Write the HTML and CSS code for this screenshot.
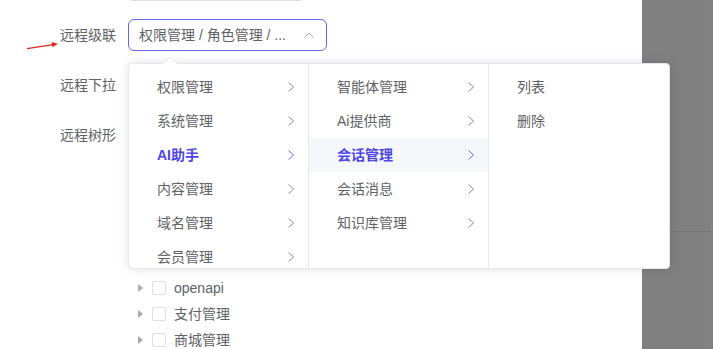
FILE: index.html
```html
<!DOCTYPE html>
<html lang="zh-CN">
<head>
<meta charset="utf-8">
<title>远程级联</title>
<link rel="stylesheet" href="styles.css">
</head>
<body>
<div class="app">
  <main class="main">
    <form class="form">
      <div class="form-item form-item-prev">
        <div class="label"></div>
        <div class="content"><div class="prev-input"></div></div>
      </div>
      <div class="form-item">
        <label class="label">远程级联</label>
        <div class="content">
          <div class="cascader">
            <span class="cascader-text">权限管理 / 角色管理 / ...</span>
            <svg class="cascader-caret" width="10" height="6" viewBox="0 0 10 6"><path d="M0.5 5.5 L5 1 L9.5 5.5" fill="none" stroke="#a8abb2" stroke-width="1"/></svg>
          </div>
        </div>
      </div>
      <div class="form-item">
        <label class="label">远程下拉</label>
        <div class="content">
          <div class="select"></div>
        </div>
      </div>
      <div class="form-item">
        <label class="label">远程树形</label>
        <div class="content">
          <ul class="tree">
            <li class="tree-node is-covered"><span class="tree-caret"><svg width="5" height="8" viewBox="0 0 5 8"><path d="M0 0 L5 4 L0 8 Z" fill="#a8abb2"/></svg></span><span class="checkbox"></span></li>
            <li class="tree-node is-covered"><span class="tree-caret"><svg width="5" height="8" viewBox="0 0 5 8"><path d="M0 0 L5 4 L0 8 Z" fill="#a8abb2"/></svg></span><span class="checkbox"></span></li>
            <li class="tree-node is-covered"><span class="tree-caret"><svg width="5" height="8" viewBox="0 0 5 8"><path d="M0 0 L5 4 L0 8 Z" fill="#a8abb2"/></svg></span><span class="checkbox"></span></li>
            <li class="tree-node is-covered"><span class="tree-caret"><svg width="5" height="8" viewBox="0 0 5 8"><path d="M0 0 L5 4 L0 8 Z" fill="#a8abb2"/></svg></span><span class="checkbox"></span></li>
            <li class="tree-node is-covered"><span class="tree-caret"><svg width="5" height="8" viewBox="0 0 5 8"><path d="M0 0 L5 4 L0 8 Z" fill="#a8abb2"/></svg></span><span class="checkbox"></span></li>
            <li class="tree-node is-covered"><span class="tree-caret"><svg width="5" height="8" viewBox="0 0 5 8"><path d="M0 0 L5 4 L0 8 Z" fill="#a8abb2"/></svg></span><span class="checkbox"></span></li>
            <li class="tree-node"><span class="tree-caret"><svg width="5" height="8" viewBox="0 0 5 8"><path d="M0 0 L5 4 L0 8 Z" fill="#a8abb2"/></svg></span><span class="checkbox"></span><span class="tree-label">openapi</span></li>
            <li class="tree-node"><span class="tree-caret"><svg width="5" height="8" viewBox="0 0 5 8"><path d="M0 0 L5 4 L0 8 Z" fill="#a8abb2"/></svg></span><span class="checkbox"></span><span class="tree-label">支付管理</span></li>
            <li class="tree-node"><span class="tree-caret"><svg width="5" height="8" viewBox="0 0 5 8"><path d="M0 0 L5 4 L0 8 Z" fill="#a8abb2"/></svg></span><span class="checkbox"></span><span class="tree-label">商城管理</span></li>
          </ul>
        </div>
      </div>
    </form>
  </main>
  <div class="mask">
    <div class="mask-body">
      <div class="mask-top"></div>
    </div>
  </div>
</div>

<div class="popper">
  <span class="popper-arrow"></span>
  <ul class="menu">
    <li class="node"><span class="node-label">权限管理</span><svg class="chev" width="6" height="10" viewBox="0 0 6 10"><path d="M0.5 0.5 L5.5 5 L0.5 9.5" fill="none" stroke="currentColor" stroke-width="1"/></svg></li>
    <li class="node"><span class="node-label">系统管理</span><svg class="chev" width="6" height="10" viewBox="0 0 6 10"><path d="M0.5 0.5 L5.5 5 L0.5 9.5" fill="none" stroke="currentColor" stroke-width="1"/></svg></li>
    <li class="node is-active"><span class="node-label">AI助手</span><svg class="chev" width="6" height="10" viewBox="0 0 6 10"><path d="M0.5 0.5 L5.5 5 L0.5 9.5" fill="none" stroke="currentColor" stroke-width="1"/></svg></li>
    <li class="node"><span class="node-label">内容管理</span><svg class="chev" width="6" height="10" viewBox="0 0 6 10"><path d="M0.5 0.5 L5.5 5 L0.5 9.5" fill="none" stroke="currentColor" stroke-width="1"/></svg></li>
    <li class="node"><span class="node-label">域名管理</span><svg class="chev" width="6" height="10" viewBox="0 0 6 10"><path d="M0.5 0.5 L5.5 5 L0.5 9.5" fill="none" stroke="currentColor" stroke-width="1"/></svg></li>
    <li class="node"><span class="node-label">会员管理</span><svg class="chev" width="6" height="10" viewBox="0 0 6 10"><path d="M0.5 0.5 L5.5 5 L0.5 9.5" fill="none" stroke="currentColor" stroke-width="1"/></svg></li>
  </ul>
  <ul class="menu">
    <li class="node"><span class="node-label">智能体管理</span><svg class="chev" width="6" height="10" viewBox="0 0 6 10"><path d="M0.5 0.5 L5.5 5 L0.5 9.5" fill="none" stroke="currentColor" stroke-width="1"/></svg></li>
    <li class="node"><span class="node-label">Ai提供商</span><svg class="chev" width="6" height="10" viewBox="0 0 6 10"><path d="M0.5 0.5 L5.5 5 L0.5 9.5" fill="none" stroke="currentColor" stroke-width="1"/></svg></li>
    <li class="node is-active is-hover"><span class="node-label">会话管理</span><svg class="chev" width="6" height="10" viewBox="0 0 6 10"><path d="M0.5 0.5 L5.5 5 L0.5 9.5" fill="none" stroke="currentColor" stroke-width="1"/></svg></li>
    <li class="node"><span class="node-label">会话消息</span><svg class="chev" width="6" height="10" viewBox="0 0 6 10"><path d="M0.5 0.5 L5.5 5 L0.5 9.5" fill="none" stroke="currentColor" stroke-width="1"/></svg></li>
    <li class="node"><span class="node-label">知识库管理</span><svg class="chev" width="6" height="10" viewBox="0 0 6 10"><path d="M0.5 0.5 L5.5 5 L0.5 9.5" fill="none" stroke="currentColor" stroke-width="1"/></svg></li>
  </ul>
  <ul class="menu">
    <li class="node"><span class="node-label">列表</span></li>
    <li class="node"><span class="node-label">删除</span></li>
  </ul>
</div>

<svg class="annot-arrow" width="40" height="14" viewBox="0 0 40 14">
  <line x1="3" y1="10.6" x2="29" y2="6.6" stroke="#e8231f" stroke-width="1.4"/>
  <polygon points="34,5.8 27.6,4.0 28.4,9.2" fill="#e8231f"/>
</svg>
</body>
</html>
```

FILE: styles.css
```css
* { box-sizing: border-box; }

html, body {
  margin: 0;
  padding: 0;
  height: 349px;
  overflow: hidden;
  background: #ffffff;
}

body {
  font-family: "Liberation Sans", "Noto Sans CJK SC", sans-serif;
  font-size: 14px;
  color: #606266;
  position: relative;
}

ul { margin: 0; padding: 0; list-style: none; }

.app {
  display: flex;
  height: 349px;
}

.main {
  width: 642px;
  flex: none;
  background: #ffffff;
  overflow: hidden;
}

.form {
  padding-left: 16px;
}

.form-item {
  display: flex;
  margin-bottom: 18px;
}

.form-item-prev {
  margin-top: -31px;
}

.label {
  width: 112px;
  flex: none;
  padding-right: 12px;
  text-align: right;
  line-height: 32px;
  height: 32px;
  color: #606266;
  font-size: 14px;
}

.content {
  flex: 1;
  line-height: 32px;
}

.prev-input {
  width: 176px;
  height: 32px;
  border: 1px solid #dcdfe6;
  border-radius: 4px;
}

.cascader {
  width: 199px;
  height: 32px;
  border: 1px solid #6366f1;
  border-radius: 6px;
  display: flex;
  align-items: center;
  padding: 0 12px 0 10px;
  gap: 4px;
}

.cascader-text {
  flex: 1;
  white-space: nowrap;
  overflow: hidden;
  color: #606266;
  font-size: 14px;
}

.cascader-caret {
  flex: none;
  display: block;
}

.select {
  width: 199px;
  height: 32px;
  border: 1px solid #dcdfe6;
  border-radius: 6px;
}

.tree-node {
  height: 26px;
  display: flex;
  align-items: center;
  line-height: 26px;
}

.tree-caret {
  width: 24px;
  height: 26px;
  flex: none;
  display: flex;
  align-items: center;
  justify-content: center;
  padding-left: 1px;
}

.tree-caret svg { display: block; }

.checkbox {
  width: 14px;
  height: 14px;
  border: 1px solid #dcdfe6;
  border-radius: 2px;
  background: #fff;
  margin-right: 8px;
  flex: none;
}

.tree-label {
  font-size: 14px;
  color: #606266;
}

.mask {
  flex: 1;
  display: flex;
  background: #808080;
  padding-right: 1px;
}

.mask-body {
  flex: 1;
  border-right: 1px solid #858585;
}

.mask-top {
  height: 232px;
  border-bottom: 1px solid #777777;
}

/* popper overlay */
.popper {
  position: absolute;
  left: 128px;
  top: 63px;
  display: flex;
  background: #ffffff;
  border: 1px solid #e4e7ed;
  border-radius: 4px;
  box-shadow: 0 0 12px rgba(0, 0, 0, 0.12);
}

.popper-arrow {
  position: absolute;
  top: -6px;
  left: 36px;
  width: 10px;
  height: 10px;
  background: #ffffff;
  border-top: 1px solid #e4e7ed;
  border-left: 1px solid #e4e7ed;
  border-top-left-radius: 2px;
  transform: rotate(45deg);
}

.menu {
  width: 180px;
  height: 204px;
  padding: 6px 0;
  overflow: hidden;
  border-right: 1px solid #e4e7ed;
}

.menu:last-child {
  border-right: none;
}

.node {
  height: 34px;
  line-height: 34px;
  display: flex;
  align-items: center;
  padding: 0 14px 0 20px;
  color: #606266;
  font-size: 14px;
}

.node-label {
  flex: 1;
  padding: 0 8px;
  white-space: nowrap;
  overflow: hidden;
  text-overflow: ellipsis;
}

.chev {
  flex: none;
  display: block;
  color: #8a8d93;
}

.node.is-active {
  color: #4f46e5;
  font-weight: bold;
}

.node.is-active .chev {
  color: #6d68ee;
}

.node.is-hover {
  background: #f5f7fa;
}

.annot-arrow {
  position: absolute;
  left: 24px;
  top: 38px;
  display: block;
}
```
